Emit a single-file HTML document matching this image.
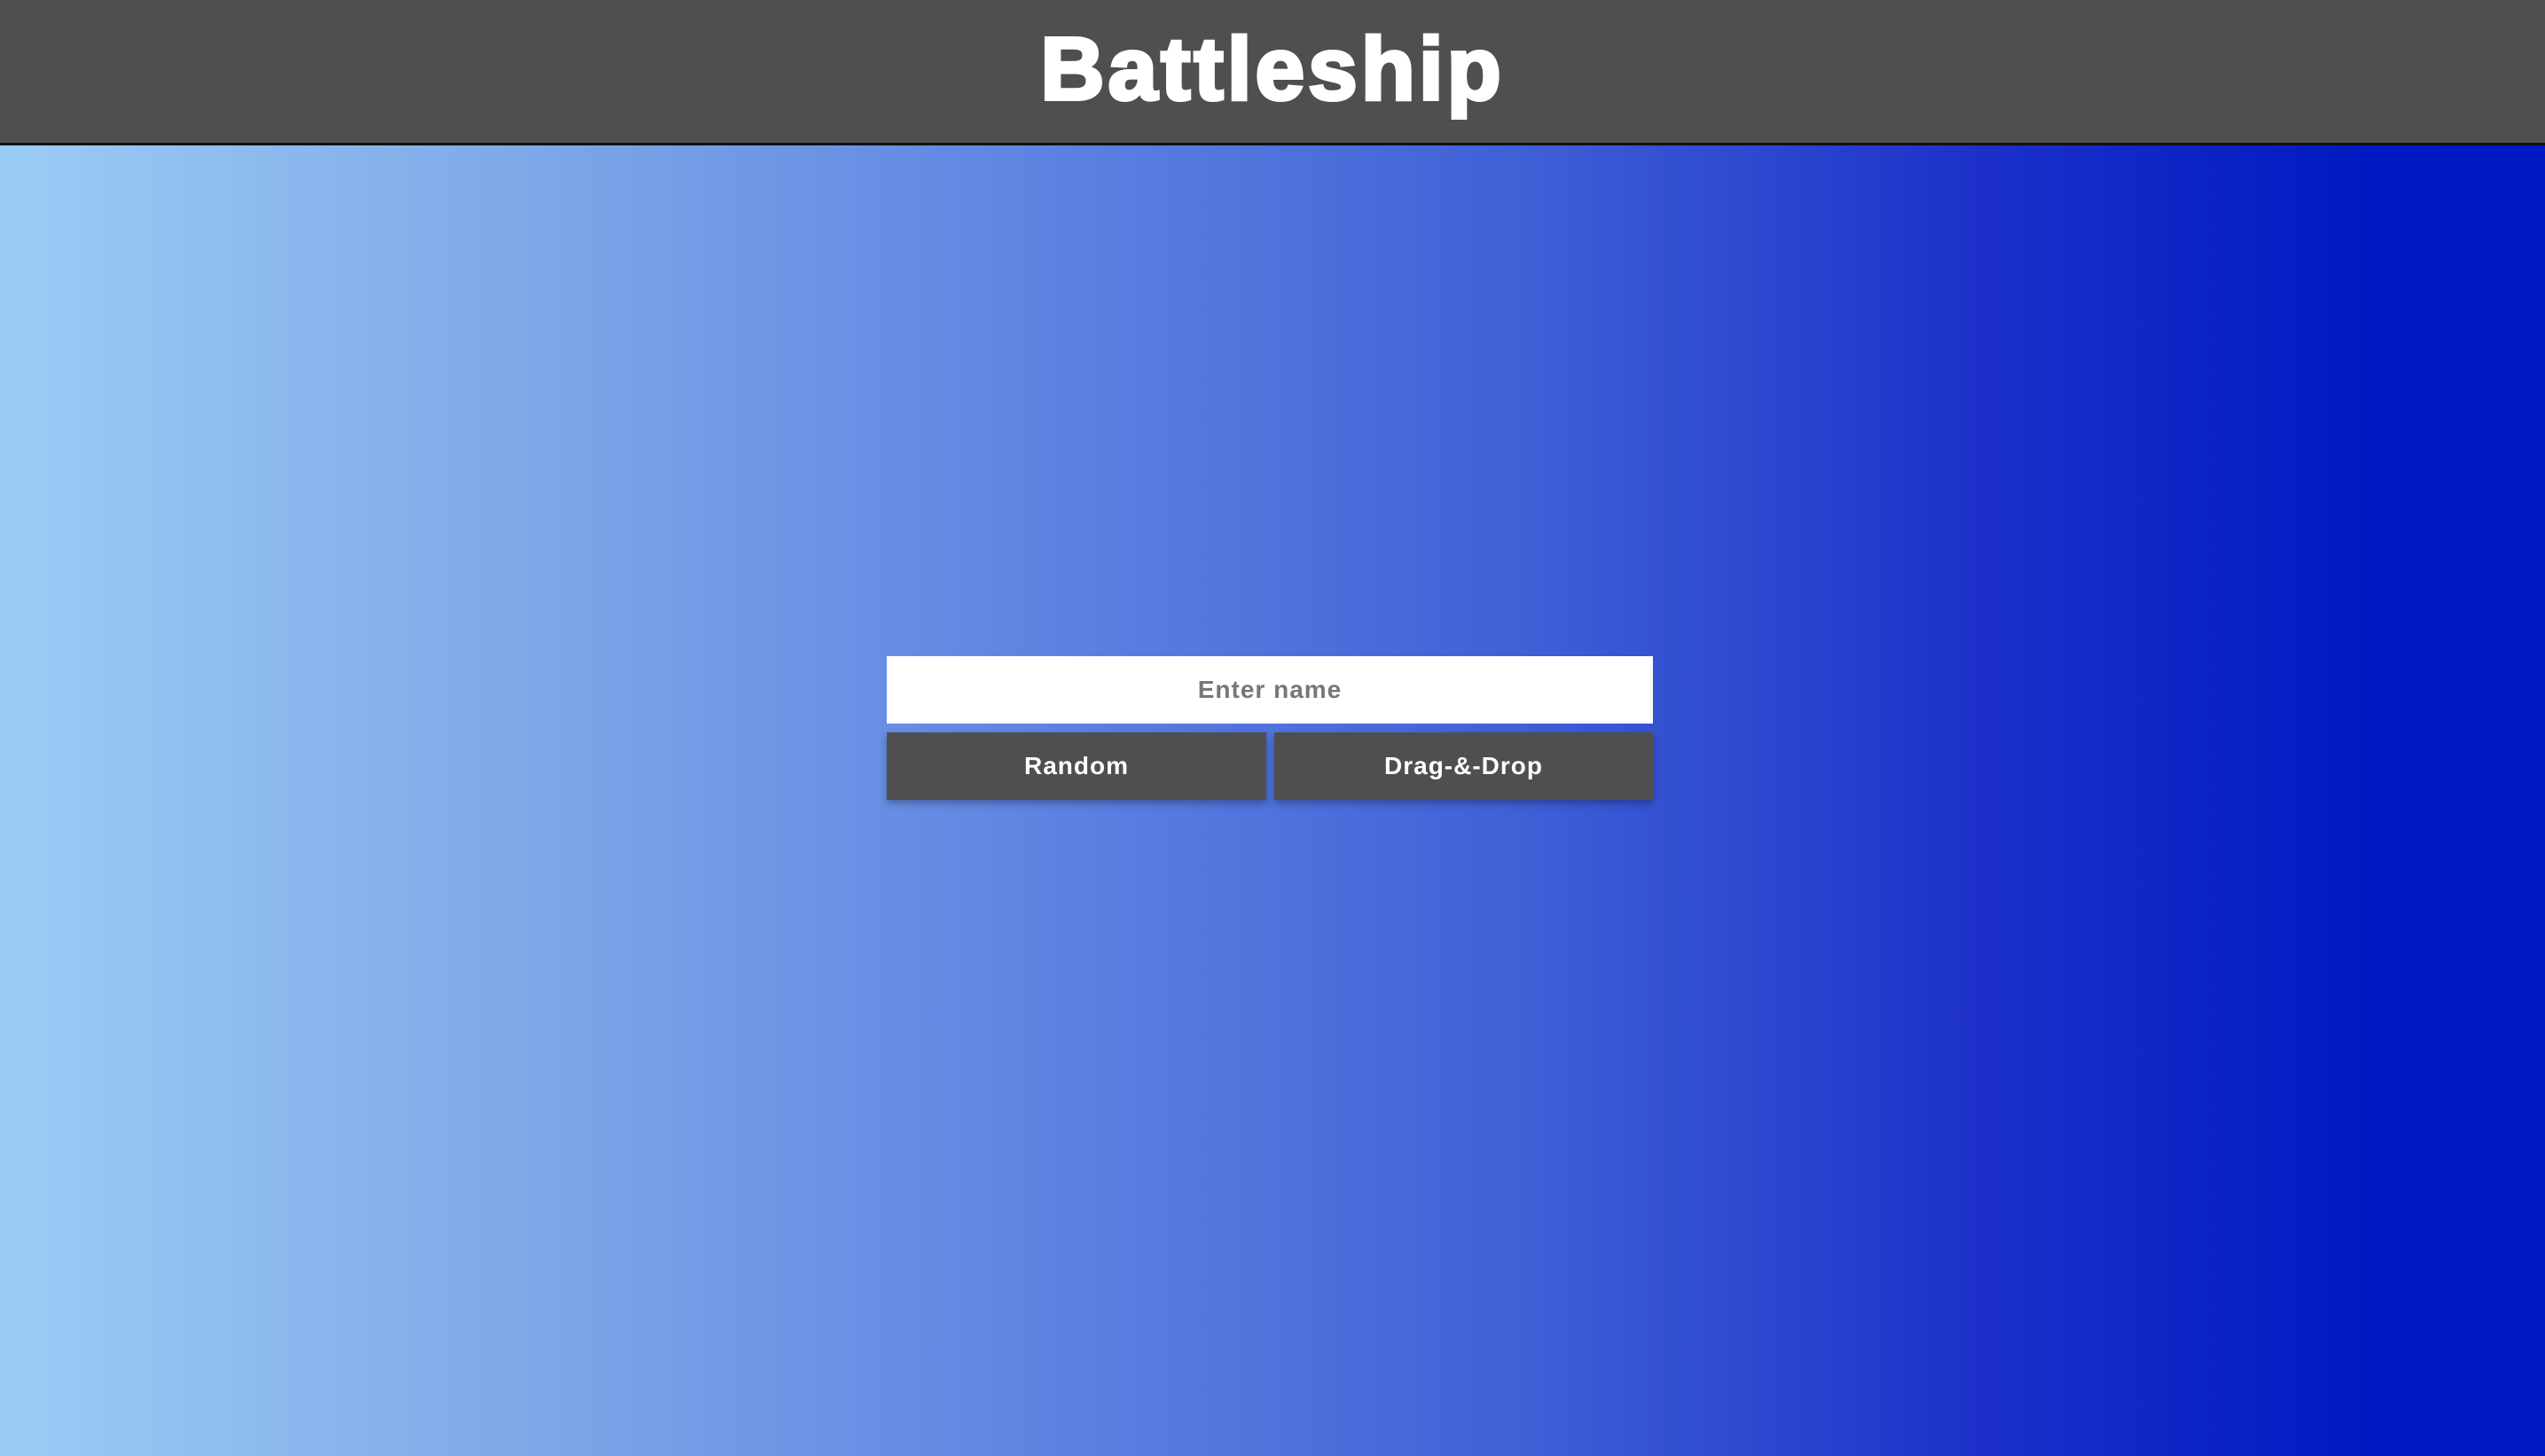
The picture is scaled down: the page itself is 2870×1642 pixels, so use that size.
<!DOCTYPE html>
<html><head><meta charset="utf-8"><style>
html,body{margin:0;padding:0;width:2870px;height:1642px;overflow:hidden;font-family:"Liberation Sans",sans-serif;}
body{background:linear-gradient(to right,#9acdf5 0%,#7fa9e8 20%,#5f85e2 40%,#3f5fd6 60%,#1c30c9 78%,#0019c2 93%,#0018c2 100%);}
header{position:absolute;left:0;top:0;width:2870px;height:161px;background:#4f4f4f;border-bottom:3px solid #111;}
h1{position:absolute;left:0;width:2870px;top:18px;margin:0;text-align:center;color:#fff;font-size:100px;font-weight:900;line-height:120px;letter-spacing:4px;-webkit-text-stroke:4px #fff;}
.input{position:absolute;left:1000px;top:740px;width:864px;height:76px;background:#fff;color:#777;font-weight:bold;font-size:28px;letter-spacing:1px;display:flex;align-items:center;justify-content:center;}
.btn{position:absolute;top:826px;height:76px;background:#4f4f4f;color:#fff;font-weight:bold;font-size:28px;letter-spacing:1px;display:flex;align-items:center;justify-content:center;box-shadow:0 4px 8px rgba(0,0,0,0.3);}
</style></head><body>
<header><h1>Battleship</h1></header>
<div class="input">Enter name</div>
<div class="btn" style="left:1000px;width:428px">Random</div>
<div class="btn" style="left:1437px;width:427px">Drag-&amp;-Drop</div>
</body></html>
